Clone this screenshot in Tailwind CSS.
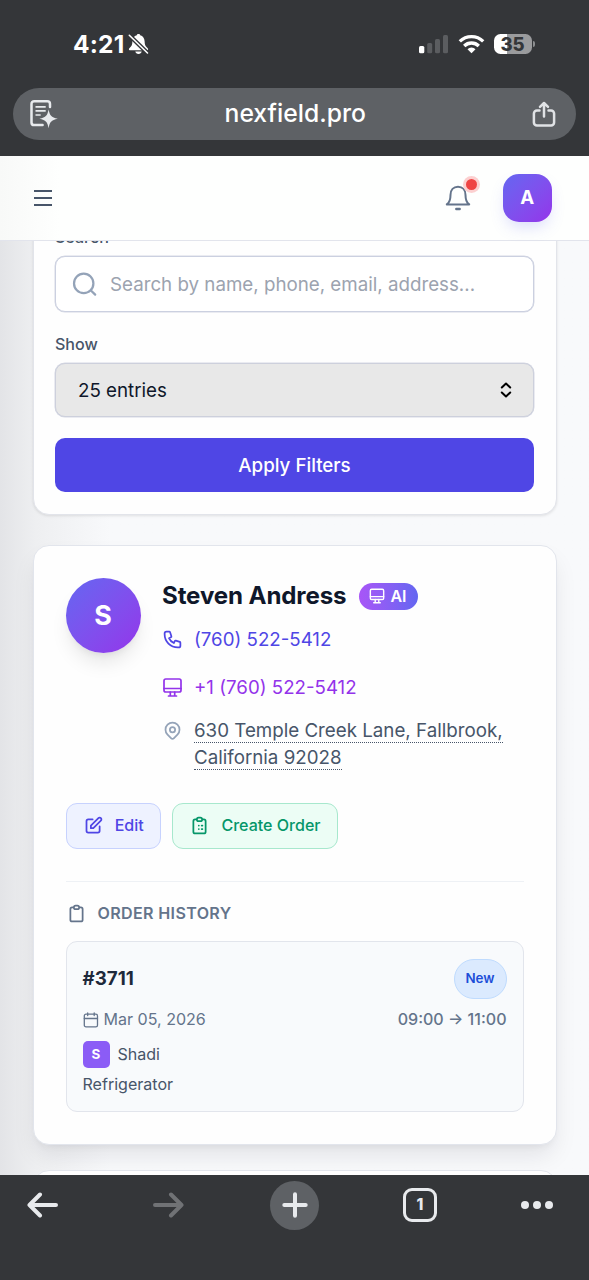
<!DOCTYPE html>
<html lang="en">
<head>
<meta charset="utf-8">
<meta name="viewport" content="width=device-width">
<title>nexfield.pro</title>
<script src="https://cdn.jsdelivr.net/npm/@tailwindcss/browser@4"></script>
</head>
<body class="flex h-[1280px] w-[589px] flex-col overflow-hidden bg-[#343639] font-['Inter',sans-serif]">
<!-- Browser chrome -->
<div class="h-[156px] shrink-0 bg-[#343639] px-[13px]">
  <div class="flex h-[88px] items-center justify-between pr-[41px] pl-[60px]">
    <div class="flex items-center gap-[4px] text-white">
      <span class="text-[24.500px] leading-[28px] font-bold tracking-[0.150px]">4:21</span>
      <svg class="h-[22px] w-[21px]" viewBox="0 0 21 22"><path fill="currentColor" d="M10.5 1c-.9 0-1.6.5-1.7 1.200C6 3 4.500 5.200 4.400 8.200c-.1 3.600-.7 4.700-2.600 6.500-.6.600-.9 1-.9 1.500 0 .6.500 1 1.200 1h16.800c.7 0 1.200-.4 1.200-1 0-.5-.3-.9-.9-1.500-1.900-1.800-2.500-2.900-2.600-6.500C16.500 5.200 15 3 12.200 2.200 12.100 1.500 11.400 1 10.500 1zM7.300 18.400h6.400c-.3 1.500-1.500 2.500-3.200 2.500s-2.900-1-3.200-2.500z"/><path stroke="#343639" stroke-width="4.200" d="M.5 1.500l19.500 19"/><path stroke="currentColor" stroke-width="1.600" stroke-linecap="round" d="M1.300 2.300l18.200 17.700"/></svg>
    </div>
    <div class="flex items-center">
      <svg class="h-[20px] w-[30px]" viewBox="0 0 30 20"><rect x="0" y="12" width="5.300" height="7.300" rx="1.500" fill="#fff"/><g fill="#5b5d60"><rect x="8.200" y="9" width="5" height="10.300" rx="1.500"/><rect x="16" y="5" width="5" height="14.300" rx="1.500"/><rect x="24" y="1" width="5" height="18.300" rx="1.500"/></g></svg>
      <svg class="ml-[9px] h-[20px] w-[27px]" viewBox="0 0 27 20"><g fill="none" stroke="#fff" stroke-width="3.300"><path d="M1.800 7.400a16.800 16.800 0 0 1 23.400 0"/><path d="M6.200 12a10.400 10.400 0 0 1 14.600 0"/></g><path fill="#fff" d="M13.500 19.300l-4-4.100a5.700 5.700 0 0 1 8 0z"/></svg>
      <div class="ml-[9px] flex h-[20px] w-[38px] items-center justify-center rounded-[6.500px] bg-linear-to-r from-white from-35% to-[#9a9b9d] to-35% text-[18.500px] leading-none font-extrabold text-[#343639]">35</div>
      <div class="ml-[1px] h-[6px] w-[2.500px] rounded-r-full bg-[#8c8e90]"></div>
    </div>
  </div>
  <div class="flex h-[52px] w-[562.500px] items-center justify-between rounded-full bg-[#5e6165] pr-[19px] pl-[17px]">
    <svg class="h-[30px] w-[28px]" viewBox="0 0 28 30" fill="none" stroke="#e8eaed"><path stroke-width="2.500" stroke-linecap="round" stroke-linejoin="round" d="M20 8V4.900a2.700 2.700 0 0 0-2.700-2.700H4.200a2.700 2.700 0 0 0-2.700 2.700v18.500a2.700 2.700 0 0 0 2.700 2.700h8.400"/><path stroke-width="1.700" d="M5.500 7.800h10.200M5.500 11.900h10.200M5.500 16h5.200"/><path fill="#e8eaed" stroke="none" d="M18.600 10.500c1.200 6 2.500 7.800 9.200 9.200-6.700 1.600-8 3-9.200 9.500-1.200-6.500-2.500-7.900-9.200-9.500 6.700-1.400 8-3.200 9.200-9.200z"/></svg>
    <div class="-mt-[2px] text-[24.700px] leading-none font-medium text-white">nexfield.pro</div>
    <svg class="h-[26px] w-[24px]" viewBox="0 0 24 26" fill="none" stroke="#e0e2e5" stroke-width="2.500" stroke-linecap="round" stroke-linejoin="round"><path d="M7.500 9.500H4.900a3 3 0 0 0-3 3v9a3 3 0 0 0 3 3h14.200a3 3 0 0 0 3-3v-9a3 3 0 0 0-3-3H16.500M12 15.500V2.500M8 5.800L12 2l4 3.800"/></svg>
  </div>
</div>

<!-- App header -->
<header class="z-10 flex h-[85px] shrink-0 items-center justify-between border-b border-[#e2e4ec] bg-[#fefffe] bg-linear-to-r from-[#f8f9f8] to-[#fefffe] to-[60px] pr-[37.500px] pl-[34px]">
  <svg class="h-[18px] w-[18px]" viewBox="0 0 18 18" stroke="#475569" stroke-width="2"><path d="M0 2h18M0 9h18M0 16h18"/></svg>
  <div class="flex items-center gap-[32px]">
    <div class="relative flex h-[28px] w-[27px] items-center justify-center">
      <svg class="h-[26px] w-[26px]" viewBox="0 0 26 26" fill="none" stroke="#64748b" stroke-width="2"><path stroke-linejoin="round" d="M1.800 19.400c2.700-1.800 3.700-5 3.700-9.500C5.500 5 8.500 1.700 13 1.700s7.500 3.300 7.500 8.200c0 4.500 1 7.700 3.700 9.500z"/><path d="M11.300 24h3.400" stroke-width="2.400" stroke-linecap="round"/></svg>
      <span class="absolute -top-[5.500px] left-[21.500px] size-[11px] rounded-full bg-[#ef4444] shadow-[0_0_0_3px_#fcd0d0]"></span>
    </div>
    <div class="flex size-[48.500px] items-center justify-center rounded-[16px] bg-linear-to-br from-[#6366f1] to-[#9333ea] text-[18.700px] font-bold text-white shadow-[0_8px_16px_-4px_rgba(99,102,241,0.250)]">A</div>
  </div>
</header>

<main class="flex h-[934px] shrink-0 flex-col overflow-hidden bg-[#f8fafc] bg-linear-to-r from-[#e3e4e7] via-[#eeeff1] via-[36px] to-[#f8f9fb] to-[110px] px-[32.500px] pt-0">
  <!-- Filters -->
  <section class="-mt-[36px] h-[310px] w-[524px] shrink-0 rounded-[16px] border border-[#e2e4ea] bg-[#fefefe] px-[21.500px] pt-[21px] shadow-[0_1px_3px_rgba(0,0,0,0.100)]">
    <div class="text-[16.060px] leading-[21px] font-medium text-[#475569]">Search</div>
    <div class="mt-[8px] flex h-[56px] items-center rounded-[10px] border border-[#cbd0e0] bg-white pl-[15px] shadow-[0_0_0_0.500px_#d5d8e4]">
      <svg class="h-[27px] w-[27px]" viewBox="0 0 24 24" fill="none" stroke="#94a3b8" stroke-width="2" stroke-linecap="round"><circle cx="11.300" cy="11" r="8.600"/><path d="M17.700 17.300L21.500 21"/></svg>
      <span class="ml-[12px] pt-[2px] text-[18.740px] text-[#9ca3af]">Search by name, phone, email, address...</span>
    </div>
    <div class="mt-[22px] text-[16.060px] leading-[21px] font-medium text-[#475569]">Show</div>
    <div class="mt-[8px] flex h-[54px] items-center justify-between rounded-[10px] border border-[#cdd0dc] bg-[#e8e8e8] pr-[21px] pl-[22px] shadow-[0_0_0_0.500px_#d5d8e4]">
      <span class="pt-[2px] text-[18.740px] text-[#0f172a]">25 entries</span>
      <svg class="h-[16px] w-[12px]" viewBox="0 0 12 16" fill="none" stroke="#000" stroke-width="2" stroke-linecap="round" stroke-linejoin="round"><path d="M1.800 5.500L6 1.500l4.200 4M1.800 10.500l4.200 4 4.200-4"/></svg>
    </div>
    <div class="mt-[21px] flex h-[54px] items-center justify-center rounded-[10px] bg-[#4f46e5] pt-[2px] text-[18.740px] font-medium text-white">Apply Filters</div>
  </section>

  <!-- Customer -->
  <section class="mt-[30px] h-[600px] w-[524px] shrink-0 rounded-[16px] border border-[#e2e5ec] bg-[#fefefe] px-[32px] pt-[32px] shadow-[0_13px_24px_-4px_rgba(15,23,42,0.100),0_5px_8px_-5px_rgba(15,23,42,0.080)]">
    <div class="flex gap-[21.500px]">
      <div class="-mt-[0.500px] flex size-[75px] shrink-0 items-center justify-center rounded-full bg-linear-to-br from-[#6366f1] to-[#9333ea] text-[26.800px] font-bold text-white shadow-[0_13px_20px_-4px_rgba(0,0,0,0.100),0_5px_8px_-5px_rgba(0,0,0,0.100)]">S</div>
      <div class="flex flex-col">
        <div class="flex h-[36px] items-center gap-[11px]">
          <span class="w-[185.500px] pt-[1px] text-[24.100px] leading-none font-bold tracking-[-0.120px] whitespace-nowrap text-[#0f172a]">Steven Andress</span>
          <span class="flex h-[27px] w-[59px] items-center justify-center gap-[5px] rounded-full bg-linear-to-r from-[#a855f7] to-[#6366f1] text-[16px] leading-none font-semibold text-white"><svg class="h-[16px] w-[16px]" viewBox="0 0 18 18" fill="none" stroke="currentColor" stroke-width="1.600" stroke-linejoin="round" stroke-linecap="round"><rect x="1.500" y="1.500" width="15" height="11.500" rx="1.500"/><path d="M1.500 9.700h15M7 13v3.300M11 13v3.300M5.300 16.600h7.400"/></svg>AI</span>
        </div>
        <div class="mt-[11px] flex h-[28px] items-center gap-[11px] text-[#4f46e5]">
          <svg class="h-[21px] w-[21px]" viewBox="0 0 24 24" fill="none" stroke="currentColor" stroke-width="2" stroke-linecap="round" stroke-linejoin="round"><path d="M3 5a2 2 0 0 1 2-2h3.280a1 1 0 0 1 .948.684l1.498 4.493a1 1 0 0 1-.502 1.210l-2.257 1.130a11.042 11.042 0 0 0 5.516 5.516l1.130-2.257a1 1 0 0 1 1.210-.502l4.493 1.498a1 1 0 0 1 .684.949V19a2 2 0 0 1-2 2h-1C9.716 21 3 14.284 3 6V5z"/></svg>
          <span class="pt-[2px] text-[18.700px]">(760) 522-5412</span>
        </div>
        <div class="mt-[20px] flex h-[28px] items-center gap-[11px] text-[#9333ea]">
          <svg class="h-[21px] w-[21px]" viewBox="0 0 21 21" fill="none" stroke="currentColor" stroke-width="1.700" stroke-linecap="round" stroke-linejoin="round"><rect x="2" y="2" width="17" height="13" rx="1.800"/><path d="M2 11.500h17M8.300 15v3.500M12.700 15v3.500M6.500 19h8"/></svg>
          <span class="pt-[2px] text-[18.700px]">+1 (760) 522-5412</span>
        </div>
        <div class="mt-[16px] flex gap-[11px]">
          <svg class="mt-[3px] h-[21px] w-[21px]" viewBox="0 0 24 24" fill="none" stroke="#94a3b8" stroke-width="2" stroke-linecap="round" stroke-linejoin="round"><path d="M17.657 16.657L13.414 20.900a1.998 1.998 0 0 1-2.827 0l-4.244-4.243a8 8 0 1 1 11.314 0z"/><path d="M15 11a3 3 0 1 1-6 0 3 3 0 0 1 6 0z"/></svg>
          <span class="w-[320px] text-[18.740px] leading-[27px] text-[#475569]"><span class="border-b border-dotted border-[#475569]">630 Temple Creek Lane, Fallbrook,<br>California 92028</span></span>
        </div>
      </div>
    </div>
    <div class="mt-[31.500px] flex h-[46px] gap-[11px] text-[16.060px] font-medium">
      <div class="flex w-[95.500px] items-center justify-center gap-[11px] rounded-[11px] border border-[#c7d2fe] bg-[#eef2ff] text-[#4f46e5]"><svg class="h-[21px] w-[21px]" viewBox="0 0 24 24" fill="none" stroke="currentColor" stroke-width="2" stroke-linecap="round" stroke-linejoin="round"><path d="M11 5H6a2 2 0 0 0-2 2v11a2 2 0 0 0 2 2h11a2 2 0 0 0 2-2v-5m-1.414-9.414a2 2 0 1 1 2.828 2.828L11.828 15H9v-2.828l8.586-8.586z"/></svg>Edit</div>
      <div class="flex w-[166px] items-center justify-center gap-[11px] rounded-[11px] border border-[#a7e8cd] bg-[#ecfdf5] text-[#059669]"><svg class="h-[21px] w-[21px]" viewBox="0 0 24 24" fill="none" stroke="currentColor" stroke-width="2" stroke-linecap="round" stroke-linejoin="round"><path d="M9 5H7a2 2 0 0 0-2 2v12a2 2 0 0 0 2 2h10a2 2 0 0 0 2-2V7a2 2 0 0 0-2-2h-2M9 5a2 2 0 0 0 2 2h2a2 2 0 0 0 2-2M9 5a2 2 0 0 1 2-2h2a2 2 0 0 1 2 2M14.500 12h.800M14.500 16h.800M11.200 12h.010M11.200 16h.010"/></svg>Create Order</div>
    </div>
    <div class="mt-[32px] h-px bg-[#eef1f5]"></div>
    <div class="mt-[21px] flex h-[22px] items-center gap-[11px] text-[16.060px] font-semibold tracking-[0.360px] text-[#64748b]"><svg class="h-[21px] w-[21px]" viewBox="0 0 24 24" fill="none" stroke="currentColor" stroke-width="2" stroke-linecap="round" stroke-linejoin="round"><path d="M9 5H7a2 2 0 0 0-2 2v12a2 2 0 0 0 2 2h10a2 2 0 0 0 2-2V7a2 2 0 0 0-2-2h-2M9 5a2 2 0 0 0 2 2h2a2 2 0 0 0 2-2M9 5a2 2 0 0 1 2-2h2a2 2 0 0 1 2 2"/></svg>ORDER HISTORY</div>
    <div class="mt-[16px] h-[171px] rounded-[11px] border border-[#e2e5ec] bg-[#f8fafc] px-[16px] pt-[17px] text-[16.060px] text-[#475569]">
      <div class="flex h-[40px] items-center justify-between">
        <span class="pt-px text-[18.740px] font-bold text-[#1e293b]">#3711</span>
        <span class="flex h-[40px] w-[53px] items-center justify-center rounded-full border border-[#bfdbfe] bg-[#dbeafe] pb-px text-[13.400px] font-semibold text-[#1d4ed8]">New</span>
      </div>
      <div class="mt-[9px] flex h-[24px] items-center justify-between text-[#64748b]">
        <span class="flex items-center gap-[5px]"><svg class="h-[16px] w-[16px]" viewBox="0 0 16 16" fill="none" stroke="currentColor" stroke-width="1.300" stroke-linecap="round"><rect x="1.300" y="2.200" width="13.200" height="12.700" rx="1.700"/><path d="M1.300 6.500h13.200M4.700 1v2.500M11.200 1v2.500"/></svg>Mar 05, 2026</span>
        <span class="font-medium">09:00 → 11:00</span>
      </div>
      <div class="mt-[9px] flex h-[27px] items-center gap-[8px]"><span class="flex size-[27px] items-center justify-center rounded-[5px] bg-[#8b5cf6] text-[13.400px] font-bold text-white">S</span>Shadi</div>
      <div class="mt-[4px] leading-[24px]">Refrigerator</div>
    </div>
  </section>
  <section class="mt-[25px] h-[100px] w-[524px] shrink-0 rounded-[16px] border border-[#e2e5ec] bg-[#fefefe]"></section>
</main>

<!-- Browser toolbar -->
<nav class="flex h-[105px] shrink-0 items-start bg-[#343639] pt-[5px] pl-[26px] text-[#e8eaed]">
  <div class="flex h-[50px] w-[126.500px] items-center"><svg class="h-[26px] w-[32px]" viewBox="0 0 32 26" fill="none" stroke="currentColor" stroke-width="4" stroke-linecap="round" stroke-linejoin="round"><path d="M30 13H3.500M14 2.500L3.500 13 14 23.500"/></svg></div>
  <div class="flex h-[50px] w-[117.500px] items-center text-[#707275]"><svg class="h-[26px] w-[32px]" viewBox="0 0 32 26" fill="none" stroke="currentColor" stroke-width="4" stroke-linecap="round" stroke-linejoin="round"><path d="M2 13h26.500M18 2.500L28.500 13 18 23.500"/></svg></div>
  <div class="flex h-[50px] w-[133px] items-center"><div class="flex size-[49px] items-center justify-center rounded-full bg-[#5e6165]"><svg class="h-[26px] w-[26px]" viewBox="0 0 26 26" stroke="currentColor" stroke-width="4" stroke-linecap="round"><path d="M13 2.300v21.400M2.300 13h21.400"/></svg></div></div>
  <div class="flex h-[50px] w-[118px] items-center"><div class="flex size-[34px] items-center justify-center rounded-[9px] border-[3px] border-[#e8eaed] text-[15.500px] leading-none font-extrabold">1</div></div>
  <div class="flex h-[50px] items-center gap-[4.500px]"><i class="size-[7.500px] rounded-full bg-[#e8eaed]"></i><i class="size-[7.500px] rounded-full bg-[#e8eaed]"></i><i class="size-[7.500px] rounded-full bg-[#e8eaed]"></i></div>
</nav>
</body>
</html>
